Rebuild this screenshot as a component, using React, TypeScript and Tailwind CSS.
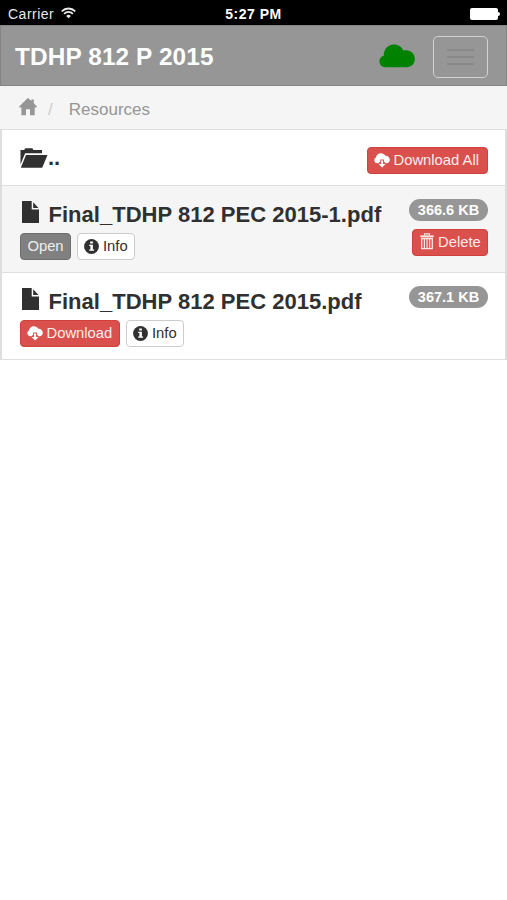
import React from "react";

const files = [
    { name: "Final_TDHP 812 PEC 2015-1.pdf", size: "366.6 KB", downloaded: true },
    { name: "Final_TDHP 812 PEC 2015.pdf", size: "367.1 KB", downloaded: false },
];

const WifiIcon = () => (
    <svg className="ml-[7px] -mt-px h-3 w-[15px]" viewBox="0 0 15 12" fill="none" stroke="#e8e8e8" strokeWidth="1.8">
        <path d="M.7 4.3a9.7 9.7 0 0 1 13.6 0M3.1 6.8a6.2 6.2 0 0 1 8.8 0" />
        <path d="M7.5 11.3 5.1 8.9a3.4 3.4 0 0 1 4.8 0z" fill="#e8e8e8" stroke="none" />
    </svg>
);

const CloudIcon = () => (
    <svg className="h-[24px] w-[36px]" viewBox="0 0 36 24" fill="#008200">
        <path d="M6 23.2a5.8 5.8 0 0 1-1.2-11.4C4.4 5.3 9 .4 15 .4c4.3 0 7.7 2.3 9.3 6.1C30.8 5 35.8 9.2 35.8 15c0 4.800-3.500 8.200-8 8.200z" />
    </svg>
);

const HomeIcon = () => (
    <svg className="-mt-0.5 h-[18px] w-[18px]" viewBox="0 0 18 18" fill="#969696">
        <path d="M8.500.3a.7.7 0 0 1 1 0L12.300 3V1.600h2.500v3.700l3 3.200c.4.500.2 1-.4 1h-1.700v7.700H11v-6H7v6H2.400V9.500H.7c-.600 0-.800-.5-.4-1z" />
    </svg>
);

const FolderIcon = () => (
    <svg className="h-[20px] w-[28px]" viewBox="0 0 28 20" fill="#303030">
        <path d="M.5 16.500V2h3.700L5.300.3h7.100l1 1.700H22v3.300H5.100z" />
        <path d="M6 7h21.500l-5.300 12.700H.8z" />
    </svg>
);

const FileIcon = () => (
    <svg className="h-[22px] w-[17px] shrink-0" viewBox="0 0 17 22" fill="#303030">
        <path d="M0 0h9.700v8.400H17V22H0z" />
        <path d="M11.200 1.200 16.500 7h-5.300z" />
    </svg>
);

const CloudDownloadIcon = () => (
    <svg className="h-[15px] w-[16px] shrink-0" viewBox="0 0 16 15" fill="#fff">
        <path d="M3 10.300A3 3 0 0 1 2 4.600C2.300 2 4.300.2 6.900.2c2 0 3.600.9 4.500 2.500 2.500-.2 4.400 1.600 4.400 4 0 2-1.500 3.600-3.300 3.600h-.8L10 8.600V6.500H6.200v2.100l-1.700 1.700z" />
        <path d="M7.100 7.400h2v3.500h2.500L8.100 14.600l-3.500-3.700h2.500z" />
    </svg>
);

const InfoIcon = () => (
    <svg className="-mt-px h-[15px] w-[15px] shrink-0" viewBox="0 0 15 15">
        <circle cx="7.5" cy="7.5" r="7.4" fill="#303030" />
        <path d="M6.200 2.400h2.700v2.200H6.200zM5.200 5.700h3.700v4.700h1.200v1.400H5.200v-1.400h1.200V7.100H5.200z" fill="#fff" />
    </svg>
);

const TrashIcon = () => (
    <svg className="-mt-[3px] h-[17px] w-[14px] shrink-0" viewBox="0 0 14 17" fill="none" stroke="#fbe3e2">
        <path d="M4.500 2.500V.8h5v1.700" strokeWidth="1.2" />
        <path d="M.3 3.300h13.400" strokeWidth="1.9" />
        <path d="M1.700 5.500h10.600v10.200H1.700z" strokeWidth="1.3" />
        <path d="M4.400 5.500v10M7 5.500v10M9.600 5.500v10" strokeWidth="1.2" />
    </svg>
);

const redButton = "flex h-[27px] items-center whitespace-nowrap rounded-[4px] border border-[#d0403c] bg-[#d9504d] text-[14.8px] leading-none text-[#fdeceb]";

const App = () => {
    return (
        <div className="h-[900px] w-[507px] overflow-hidden bg-white font-['Liberation_Sans',Arial,sans-serif] text-[#303030]">
            <div className="grid h-[25px] grid-cols-3 items-center bg-black text-[14px] leading-none text-[#e8e8e8]">
                <div className="flex items-center pl-2 pt-0.5">
                    <span className="tracking-[0.5px]">Carrier</span>
                    <WifiIcon />
                </div>
                <span className="pt-0.5 text-center font-bold tracking-[0.5px] text-white">5:27 PM</span>
                <div className="flex items-center justify-end pr-[7px] pt-0.5">
                    <span className="h-[12px] w-[28px] rounded-[2px] bg-white" />
                    <span className="h-1 w-[2px] rounded-r bg-white" />
                </div>
            </div>

            <header className="flex h-[61px] items-center border border-[#858585] bg-[#969696] pl-[14px] pr-[18px]">
                <h1 className="pt-1 text-[24.4px] font-bold leading-none tracking-[0.1px] text-white">TDHP 812 P 2015</h1>
                <div className="ml-auto mr-[18px]">
                    <CloudIcon />
                </div>
                <button className="mt-0.5 flex h-[42px] w-[55px] flex-col items-center justify-center gap-[5px] rounded-[5px] border-[1.5px] border-[#d2d2d2]">
                    <span className="h-[2px] w-[27px] bg-[#898989]" />
                    <span className="h-[2px] w-[27px] bg-[#898989]" />
                    <span className="h-[2px] w-[27px] bg-[#898989]" />
                </button>
            </header>

            <nav className="flex h-[43px] items-center bg-[#f5f5f5] pl-[19px] text-[17px] leading-none text-[#969696]">
                <HomeIcon />
                <span className="ml-[11px] pt-1 text-[#cccccc]">/</span>
                <span className="ml-[16px] pt-1">Resources</span>
            </nav>

            <ul className="border-2 border-b border-t-0 border-[#dedede]">
                <li className="flex h-[56px] items-center justify-between border-t border-[#dedede] pl-[18px] pr-[17px]">
                    <div className="flex items-end">
                        <FolderIcon />
                        <span className="mb-px text-[22px] font-bold leading-[18px]">..</span>
                    </div>
                    <button className={`${redButton} mt-[5px] w-[121px] pl-[6px]`}>
                        <CloudDownloadIcon />
                        <span className="ml-[3.5px]">Download All</span>
                    </button>
                </li>
                {files.map((file) => (
                    <li
                        key={file.name}
                        className={`flex h-[87px] justify-between border-t border-[#dedede] pl-[18px] pr-[17px] ${file.downloaded ? "bg-[#f5f5f5]" : "bg-white"}`}
                    >
                        <div className="pt-[15px]">
                            <div className="flex h-[22px] items-center pl-[2px]">
                                <FileIcon />
                                <span className="ml-[9.5px] whitespace-nowrap pt-[5px] text-[22px] font-bold leading-none tracking-[0.02px]">{file.name}</span>
                            </div>
                            <div className="mt-[10px] flex gap-[6px]">
                                {file.downloaded ? (
                                    <button className="h-[27px] w-[51px] rounded-[4px] border border-[#6f6f6f] bg-[#808080] text-[14.8px] leading-none text-[#eeeeee]">Open</button>
                                ) : (
                                    <button className={`${redButton} w-[100px] pl-[6px]`}>
                                        <CloudDownloadIcon />
                                        <span className="ml-[3.5px]">Download</span>
                                    </button>
                                )}
                                <button className="flex h-[27px] w-[58px] items-center rounded-[4px] border border-[#cccccc] bg-white pl-[6px] text-[14.8px] leading-none">
                                    <InfoIcon />
                                    <span className="ml-[4px]">Info</span>
                                </button>
                            </div>
                        </div>
                        <div className="flex flex-col items-end pt-[12.5px]">
                            <span className="flex h-[22.5px] w-[79px] items-center justify-center rounded-full bg-[#969696] text-[14.5px] font-bold leading-none text-white">{file.size}</span>
                            {file.downloaded && (
                                <button className={`${redButton} mt-[8px] w-[76px] pl-[7px]`}>
                                    <TrashIcon />
                                    <span className="ml-[4px]">Delete</span>
                                </button>
                            )}
                        </div>
                    </li>
                ))}
            </ul>
        </div>
    );
};

export default App;
